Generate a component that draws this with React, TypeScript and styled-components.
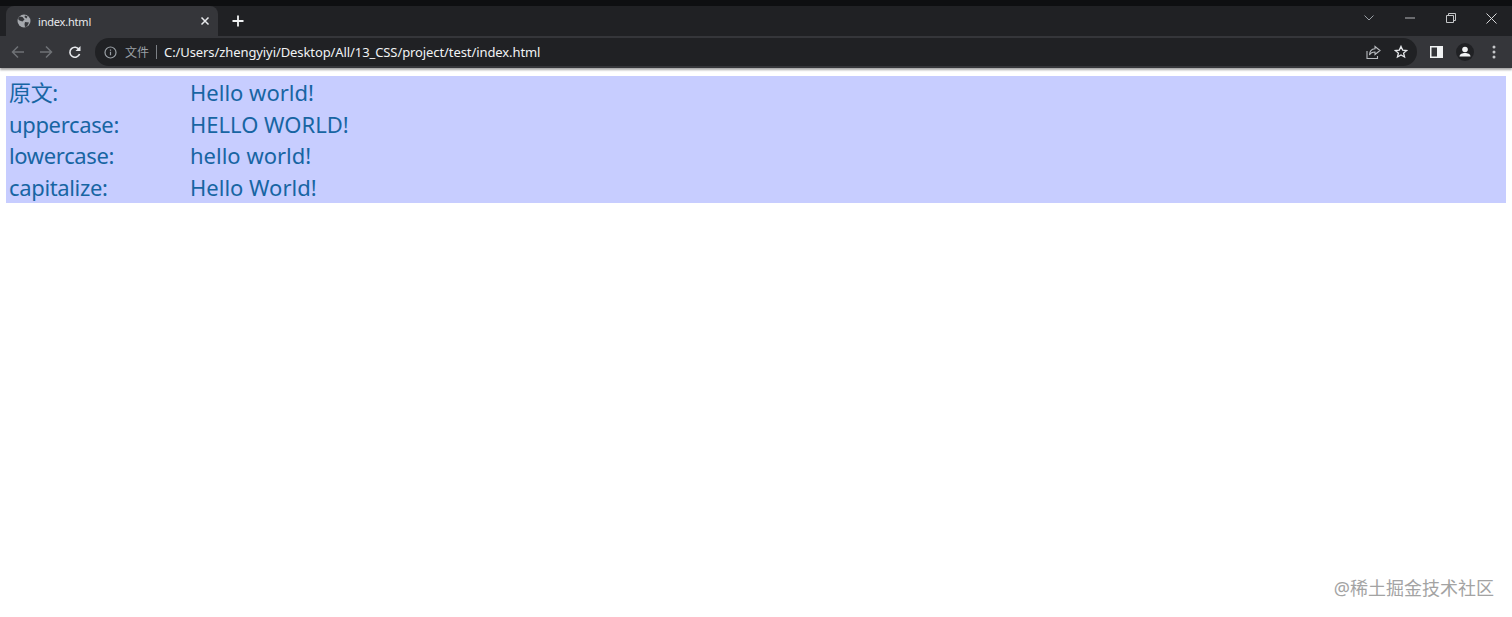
import { Fragment } from 'react'
import styled, { createGlobalStyle } from 'styled-components'

const GlobalStyle = createGlobalStyle`
  html, body {
    margin: 0;
    padding: 0;
    background: #fff;
  }
  * {
    box-sizing: border-box;
  }
`
const Page = styled.div`
  position: relative;
  width: 1512px;
  height: 617px;
  overflow: hidden;
  font-family: "Noto Sans", "Noto Sans CJK SC", sans-serif;
`
const TopStrip = styled.div`
  height: 6px;
  background: #0e0f11;
`
const TabBar = styled.div`
  display: flex;
  align-items: flex-end;
  height: 30px;
  padding-left: 6px;
  background: #202124;
`
const Tab = styled.div`
  display: flex;
  align-items: center;
  width: 212px;
  height: 30px;
  padding: 0 8px 0 11px;
  background: #35363a;
  border-radius: 8px 8px 0 0;
`
const TabTitle = styled.span`
  flex: 1;
  margin-left: 7px;
  font-size: 11px;
  letter-spacing: -0.2px;
  color: #e8eaed;
`
const NewTab = styled.div`
  display: flex;
  align-items: center;
  justify-content: center;
  width: 26px;
  height: 30px;
  margin-left: 7px;
`
const Spacer = styled.div`
  flex: 1;
  margin-right: -1px;
`
const WindowButton = styled.div`
  display: flex;
  align-items: center;
  justify-content: center;
  flex: none;
  width: 41px;
  height: 26px;
  margin-bottom: 5px;
`
const Toolbar = styled.div`
  display: flex;
  align-items: center;
  height: 32px;
  padding-left: 4px;
  background: #35363a;
  box-shadow: 0 2px 2px rgba(0, 0, 0, 0.35);
  position: relative;
`
const NavButton = styled.div`
  display: flex;
  align-items: center;
  justify-content: center;
  width: 28px;
  height: 28px;
  flex: none;
`
const ReloadButton = styled(NavButton)`
  margin-left: 1px;
`
const Omnibox = styled.div`
  display: flex;
  align-items: center;
  width: 1322px;
  height: 28px;
  margin-left: 6px;
  padding: 0 2px 0 9px;
  background: #202124;
  border-radius: 14px;
`
const SecurityLabel = styled.span`
  margin-left: 8px;
  font-size: 12px;
  color: #9aa0a6;
`
const Divider = styled.span`
  width: 1px;
  height: 14px;
  margin: 0 7px 0 7px;
  background: #7c8085;
`
const Url = styled.span`
  flex: 1;
  font-size: 13px;
  letter-spacing: -0.09px;
  color: #f1f3f4;
`
const OmniIcon = styled.div`
  display: flex;
  align-items: center;
  justify-content: center;
  width: 28px;
  height: 28px;
`
const ToolbarActions = styled.div`
  display: flex;
  align-items: center;
  gap: 1px;
  margin-left: 5px;
`
const Content = styled.main`
  padding: 8px 6px 6px;
`
const Panel = styled.div`
  display: grid;
  grid-template-columns: 181px 1fr;
  grid-auto-rows: 31.5px;
  height: 127px;
  padding: 1px 0 0 3px;
  font-size: 22px;
  line-height: 31.5px;
  color: #1765a3;
  background: #c7cdff;
`
const Label = styled.div`
  white-space: nowrap;
  letter-spacing: -0.35px;
`
const Sample = styled.div<{ $transform?: 'uppercase' | 'lowercase' | 'capitalize' }>`
  white-space: nowrap;
  text-transform: ${p => p.$transform ?? 'none'};
`
const Watermark = styled.div`
  position: absolute;
  right: 18px;
  bottom: 18px;
  font-size: 18px;
  line-height: 22px;
  color: #a3a3a3;
`

const rows = [
  { label: '原文:', transform: undefined },
  { label: 'uppercase:', transform: 'uppercase' },
  { label: 'lowercase:', transform: 'lowercase' },
  { label: 'capitalize:', transform: 'capitalize' },
] as const

const App = () => {
  return (
    <Page>
      <GlobalStyle />
      <TopStrip />
      <TabBar>
        <Tab>
          <svg width="14" height="14" viewBox="0 0 14 14">
            <circle cx="7" cy="7" r="6.5" fill="#a5a8ad" />
            <path d="M2.5 2.500l3 .5 2 2.500-2 2-3-1-1.500-1.500zM8 1.500l2.500 1-1 2-2-1.500zM8 8l4 .5-2 4-2 .5-.5-3z" fill="#35363a" />
          </svg>
          <TabTitle>index.html</TabTitle>
          <svg width="10" height="10" viewBox="0 0 10 10">
            <path d="M1.5 1.5l7 7M8.5 1.5l-7 7" stroke="#e8eaed" strokeWidth="1.5" />
          </svg>
        </Tab>
        <NewTab>
          <svg width="14" height="14" viewBox="0 0 14 14">
            <path d="M7 1.500v11M1.500 7h11" stroke="#f1f3f4" strokeWidth="1.800" />
          </svg>
        </NewTab>
        <Spacer />
        <WindowButton>
          <svg width="10" height="6" viewBox="0 0 10 6" fill="none">
            <path d="M.5.5L5 5 9.500.5" stroke="#9aa0a6" />
          </svg>
        </WindowButton>
        <WindowButton>
          <svg width="10" height="2" viewBox="0 0 10 2">
            <path d="M0 1h10" stroke="#b5b7ba" />
          </svg>
        </WindowButton>
        <WindowButton>
          <svg width="10" height="10" viewBox="0 0 10 10" fill="none">
            <path d="M.5 2.500h7v7h-7zM2.500 2.500v-2h7v7h-2" stroke="#c4c6c8" />
          </svg>
        </WindowButton>
        <WindowButton>
          <svg width="11" height="11" viewBox="0 0 11 11" fill="none">
            <path d="M.5.5l10 10M10.500.5l-10 10" stroke="#d6d7d9" />
          </svg>
        </WindowButton>
      </TabBar>
      <Toolbar>
        <NavButton>
          <svg width="14" height="14" viewBox="0 0 14 14" fill="none">
            <path d="M13 7H2M7 1.500L1.500 7 7 12.500" stroke="#6f7276" strokeWidth="1.500" />
          </svg>
        </NavButton>
        <NavButton>
          <svg width="14" height="14" viewBox="0 0 14 14" fill="none">
            <path d="M1 7h11M7 1.500L12.500 7 7 12.500" stroke="#6f7276" strokeWidth="1.500" />
          </svg>
        </NavButton>
        <ReloadButton>
          <svg width="14" height="14" viewBox="0 0 14 14" fill="none">
            <path d="M11.600 9a5 5 0 1 1-.4-4.300" stroke="#e8eaed" strokeWidth="1.600" />
            <path d="M12.500 1v5h-5z" fill="#e8eaed" />
          </svg>
        </ReloadButton>
        <Omnibox>
          <svg width="13" height="13" viewBox="0 0 13 13" fill="none">
            <circle cx="6.500" cy="6.500" r="5.500" stroke="#9aa0a6" strokeWidth="1.200" />
            <path d="M6.500 5.800v3.400M6.500 3.500v1.200" stroke="#9aa0a6" strokeWidth="1.200" />
          </svg>
          <SecurityLabel>文件</SecurityLabel>
          <Divider />
          <Url>C:/Users/zhengyiyi/Desktop/All/13_CSS/project/test/index.html</Url>
          <OmniIcon>
            <svg width="15" height="15" viewBox="0 0 15 15" fill="none">
              <path d="M9 1.500l5 4-5 4V7C6 7 4.500 8 3.500 10c0-3.500 2-6 5.500-6.300z" stroke="#b9bcc0" strokeWidth="1.100" />
              <path d="M1 6v7.500h10.500V11" stroke="#b9bcc0" strokeWidth="1.100" />
            </svg>
          </OmniIcon>
          <OmniIcon>
            <svg width="14" height="14" viewBox="0 0 15 15" fill="none">
              <path d="M7.500 1.500l1.800 4 4.200.4-3.200 2.800 1 4.200-3.800-2.200-3.800 2.200 1-4.200L1.500 5.900l4.200-.4z" stroke="#e8eaed" strokeWidth="1.400" />
            </svg>
          </OmniIcon>
        </Omnibox>
        <ToolbarActions>
          <NavButton>
            <svg width="13" height="12" viewBox="0 0 13 12">
              <path d="M0 0h13v12H0zM1.500 1.500v9h5.500v-9z" fill="#f1f3f4" fillRule="evenodd" />
            </svg>
          </NavButton>
          <NavButton>
            <svg width="18" height="18" viewBox="0 0 18 18">
              <circle cx="9" cy="9" r="9" fill="#202124" />
              <circle cx="9" cy="6.500" r="2.800" fill="#f1f3f4" />
              <path d="M3.500 13.500c0-2.500 3-3.500 5.500-3.500s5.500 1 5.500 3.500z" fill="#f1f3f4" />
            </svg>
          </NavButton>
          <NavButton>
            <svg width="4" height="14" viewBox="0 0 4 14">
              <circle cx="2" cy="2" r="1.500" fill="#c4c6c8" />
              <circle cx="2" cy="7" r="1.500" fill="#c4c6c8" />
              <circle cx="2" cy="12" r="1.500" fill="#c4c6c8" />
            </svg>
          </NavButton>
        </ToolbarActions>
      </Toolbar>
      <Content>
        <Panel>
          {rows.map(row => (
            <Fragment key={row.label}>
              <Label>{row.label}</Label>
              <Sample $transform={row.transform}>Hello world!</Sample>
            </Fragment>
          ))}
        </Panel>
      </Content>
      <Watermark>@稀土掘金技术社区</Watermark>
    </Page>
  )
}

export default App
